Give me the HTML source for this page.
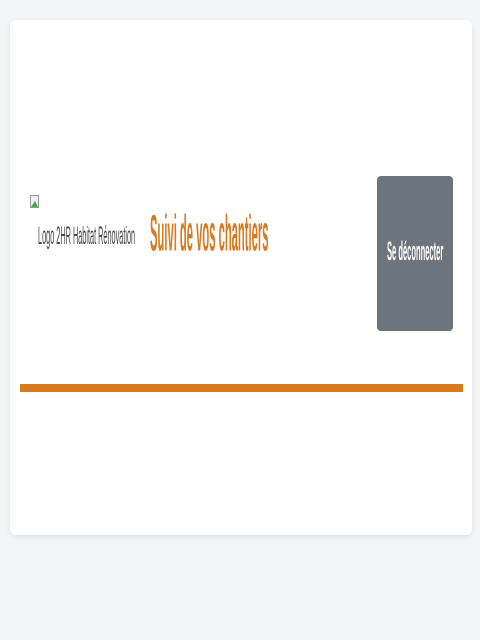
<!DOCTYPE html>
<html><head><style>
body{margin:0;width:480px;height:640px;background:#f4f5f6;font-family:"Liberation Sans",sans-serif;position:relative;overflow:hidden}
.card{position:absolute;left:10px;top:20px;width:462px;height:515px;background:#fff;border-radius:6px;box-shadow:0 2px 6px rgba(0,0,0,.08)}
.line{position:absolute;left:20px;top:384px;width:443px;height:8px;background:#d97a1f}
.btn{position:absolute;left:377px;top:176px;width:76px;height:155px;background:#6c757d;border-radius:4px;color:#fff}
.sx{display:inline-block;white-space:nowrap;transform-origin:left top}
.title{position:absolute;left:150px;top:204px;color:#d97a1f;font-weight:bold;font-size:34px;line-height:40px}
</style></head><body>
<div class="card"></div>
<svg width="10" height="14" style="position:absolute;left:30px;top:195px"><rect x="0.5" y="0.5" width="8" height="12" fill="#eef" stroke="#999"/><path d="M1 12 L5 6 L8 12Z" fill="#4a4"/></svg>
<span class="sx" style="position:absolute;left:38px;top:222px;font-size:17px;color:#444;transform:scaleX(.43) scaleY(1.45)">Logo 2HR Habitat Rénovation</span>
<div class="title"><span class="sx" style="transform:scaleX(.33) scaleY(1.5)">Suivi de vos chantiers</span></div>
<div class="btn"><span class="sx" style="position:absolute;left:10px;top:60px;font-size:18px;font-weight:bold;transform:scaleX(.42) scaleY(1.5)">Se déconnecter</span></div>
<div class="line"></div>
</body></html>
